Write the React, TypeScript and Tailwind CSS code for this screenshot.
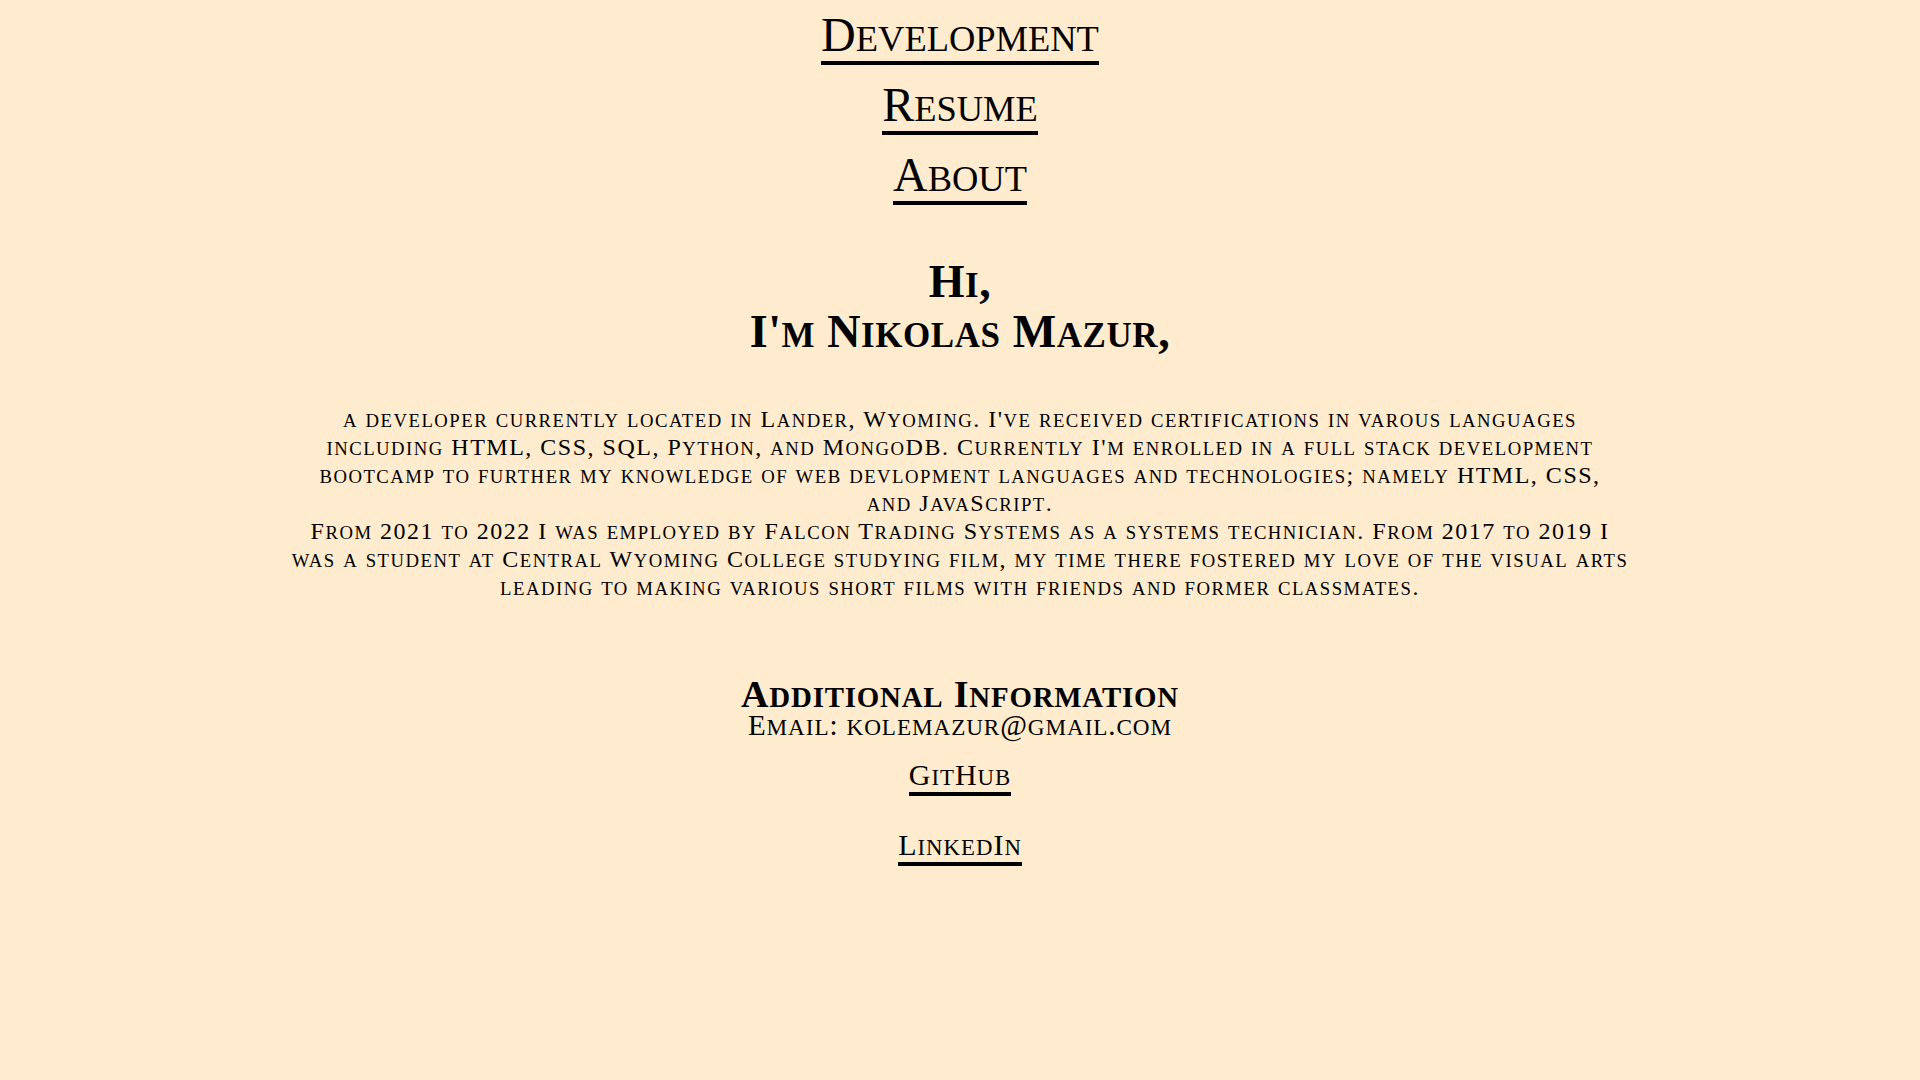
import React from "react";

function SC({ text, small = "text-[0.76em]" }: { text: string; small?: string }) {
  const parts = text.split(/([a-z]+)/);
  return (
    <>
      {parts.map((p, i) =>
        /^[a-z]+$/.test(p) ? (
          <span key={i} className={`uppercase leading-[0] ${small}`}>
            {p}
          </span>
        ) : (
          <React.Fragment key={i}>{p}</React.Fragment>
        )
      )}
    </>
  );
}

const navLink =
  "inline-block text-black no-underline border-b-4 border-black text-[48px] leading-[52px]";
const subLink =
  "inline-block text-black no-underline border-b-4 border-black text-[30px] leading-[34px] tracking-[1px]";

const para = [
  "a developer currently located in Lander, Wyoming. I've received certifications in varous languages",
  "including HTML, CSS, SQL, Python, and MongoDB. Currently I'm enrolled in a full stack development",
  "bootcamp to further my knowledge of web devlopment languages and technologies; namely HTML, CSS,",
  "and JavaScript.",
  "From 2021 to 2022 I was employed by Falcon Trading Systems as a systems technician. From 2017 to 2019 I",
  "was a student at Central Wyoming College studying film, my time there fostered my love of the visual arts",
  "leading to making various short films with friends and former classmates.",
];

export default function App() {
  return (
    <div className="min-h-screen w-full bg-[#ffebcd] text-black font-['Liberation_Serif',serif] flex flex-col items-center">
      <nav className="flex flex-col items-center gap-[14px] pt-[9px]">
        <a href="#" className={navLink}>
          <SC text="Development" />
        </a>
        <a href="#" className={navLink}>
          <SC text="Resume" />
        </a>
        <a href="#" className={navLink}>
          <SC text="About" />
        </a>
      </nav>

      <h1 className="mt-[52px] text-center text-[46px] leading-[50px] font-bold tracking-[0.6px]">
        <SC text="Hi," />
        <br />
        <SC text="I'm Nikolas Mazur," />
      </h1>

      <p className="mt-[48px] w-[1440px] text-center text-[24px] leading-[28px] tracking-[1.5px]">
        {para.map((line, i) => (
          <React.Fragment key={i}>
            <SC text={line} small="text-[0.78em]" />
            {i < para.length - 1 && <br />}
          </React.Fragment>
        ))}
      </p>

      <h2 className="mt-[74px] text-center text-[38px] leading-[38px] font-bold tracking-[0.8px]">
        <SC text="Additional Information" />
      </h2>
      <div className="mt-[-2px] text-center text-[29px] leading-[28px] tracking-[0.9px]">
        <SC text="Email: kolemazur@gmail.com" small="text-[0.8em]" />
      </div>
      <a href="#" className={`${subLink} mt-[19px]`}>
        <SC text="GitHub" />
      </a>
      <a href="#" className={`${subLink} mt-[32px] tracking-[1.4px]`}>
        <SC text="LinkedIn" />
      </a>
    </div>
  );
}
